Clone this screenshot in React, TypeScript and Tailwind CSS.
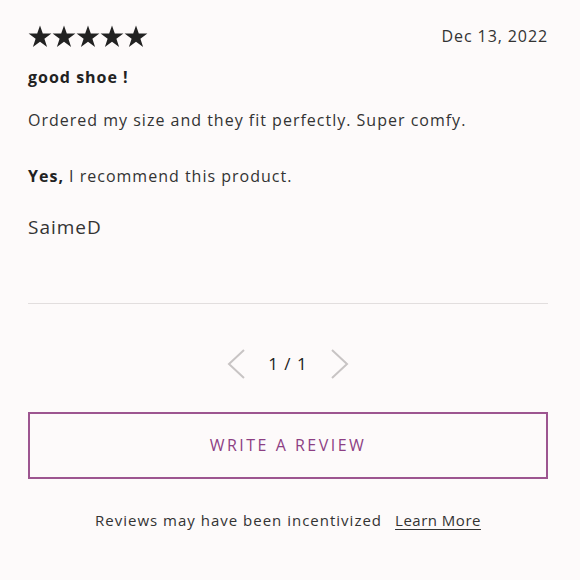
import React from 'react';

function Star() {
  return (
    <svg width="24" height="23" viewBox="0 0 24 23" aria-hidden="true">
      <path d="M12 0.5l2.8 8.1h8.6l-7 5.1 2.7 8.2L12 16.8l-7.1 5.1 2.7-8.2-7-5.1h8.6z" fill="#222" />
    </svg>
  );
}

function Chevron({ dir }: { dir: 'left' | 'right' }) {
  return (
    <svg width="20" height="32" viewBox="0 0 20 32" aria-hidden="true">
      <path
        d={dir === 'left' ? 'M18 2L3 16l15 14' : 'M2 2l15 14L2 30'}
        fill="none"
        stroke="#c8c4c4"
        strokeWidth="2"
      />
    </svg>
  );
}

export default function App() {
  return (
    <div className="min-h-[580px] w-[580px] bg-[#fdfafa] pl-[28px] pr-[32px] pt-[24px] text-[#222] [font-family:'Open_Sans','Liberation_Sans',sans-serif]">
      <div className="flex items-center justify-between">
        <div className="flex">
          <Star />
          <Star />
          <Star />
          <Star />
          <Star />
        </div>
        <span className="text-[16px] tracking-[0.9px] text-[#333]">Dec 13, 2022</span>
      </div>

      <h2 className="mt-[17px] text-[16px] font-bold tracking-[1px]">good shoe !</h2>

      <p className="mt-[19px] text-[16px] tracking-[1px] text-[#333]">
        Ordered my size and they fit perfectly. Super comfy.
      </p>

      <p className="mt-[32px] text-[16px] tracking-[1px] text-[#333]">
        <span className="font-bold text-[#222]">Yes,</span> I recommend this product.
      </p>

      <p className="mt-[25px] text-[19px] tracking-[1px] text-[#333]">SaimeD</p>

      <div className="mt-[61px] h-px bg-[#e2dede]" />

      <div className="mt-[44px] flex items-center justify-center gap-[22px]">
        <Chevron dir="left" />
        <span className="text-[17px] tracking-[1px] text-[#222]">1 / 1</span>
        <Chevron dir="right" />
      </div>

      <button className="mt-[32px] flex h-[67px] w-full items-center justify-center border-2 border-[#9d5590] text-[16px] font-medium tracking-[2.5px] text-[#8d3f84]">
        WRITE A REVIEW
      </button>

      <div className="mt-[30px] flex justify-center gap-[13px] text-[15px] text-[#333]">
        <span className="tracking-[1px]">Reviews may have been incentivized</span>
        <a className="tracking-[0.5px] underline underline-offset-[3px]">Learn More</a>
      </div>
    </div>
  );
}
